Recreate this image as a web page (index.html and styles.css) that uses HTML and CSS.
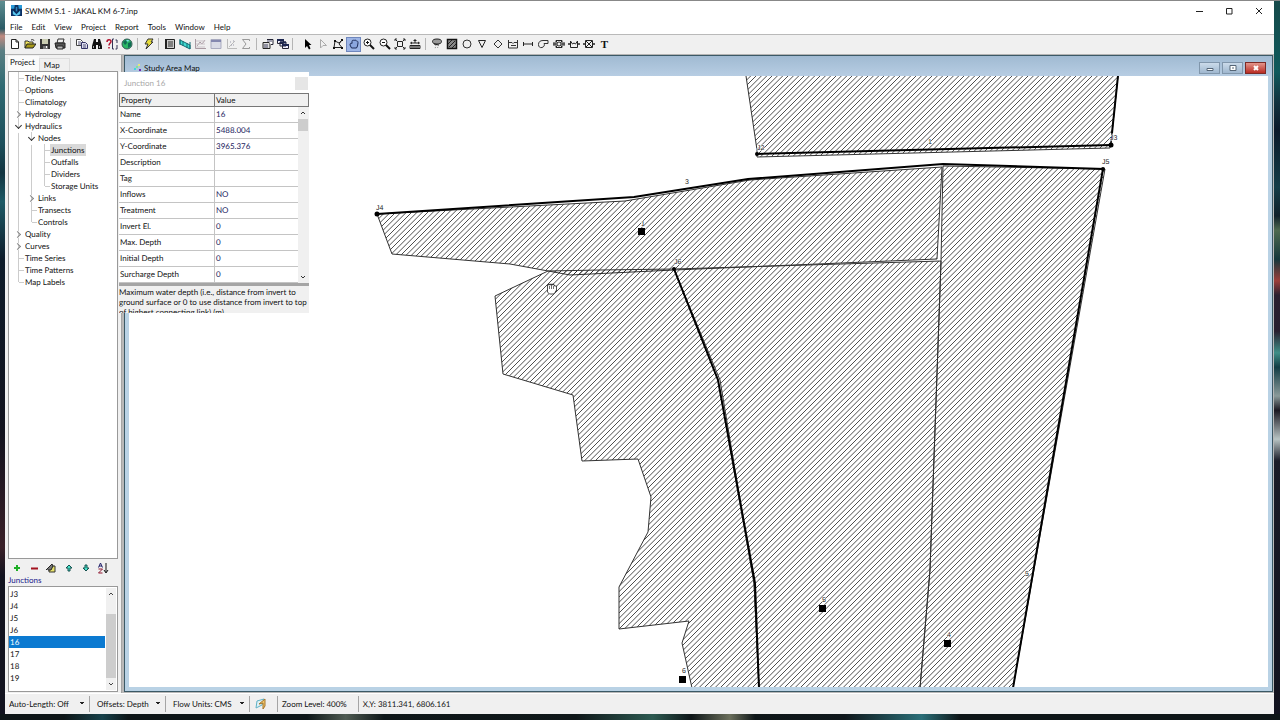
FILE: index.html
```html
<!DOCTYPE html>
<html lang="en">
<head>
<meta charset="utf-8">
<title>SWMM 5.1 - JAKAL KM 6-7.inp</title>
<link rel="stylesheet" href="styles.css">
</head>
<body>
<div class="window">
  <header class="titlebar">
    <svg class="app-icon" viewBox="0 0 12 12"><rect width="12" height="12" fill="#0b2f63"/><path d="M0 0h4v4H0zM8 0h4v4H8z" fill="#2b9bd8"/><path d="M4 2h4v5H4z" fill="#061a33"/><path d="M2 6l4 4 4-4v4l-4 2-4-2z" fill="#59c7ef"/><path d="M5 2h2v5H5z" fill="#2d7fc1"/></svg>
    <h1 class="title">SWMM 5.1 - JAKAL KM 6-7.inp</h1>
    <div class="window-controls">
      <button aria-label="Minimize"><svg viewBox="0 0 8 8"><path d="M1 4.500h7" stroke="#222"/></svg></button>
      <button aria-label="Maximize"><svg viewBox="0 0 8 8"><path d="M1.500 1.500h5.500v5.500h-5.500z" fill="none" stroke="#222"/></svg></button>
      <button aria-label="Close"><svg viewBox="0 0 8 8"><path d="M1 1l6 6M7 1l-6 6" stroke="#222"/></svg></button>
    </div>
  </header>
  <nav class="menubar">
    <button>File</button><button>Edit</button><button>View</button><button>Project</button><button>Report</button><button>Tools</button><button>Window</button><button>Help</button>
  </nav>
  <div class="toolbar">
    <div class="tools four">
      <button aria-label="New"><svg viewBox="0 0 12 12"><path d="M2.500 1.500h4.500l2.500 2.500v6.500h-7zM7 1.500v2.500h2.500" fill="#fff" stroke="#222"/></svg></button>
      <button aria-label="Open"><svg viewBox="0 0 12 12"><path d="M1 10V3h3l1 1h4v2" fill="#f2e45c" stroke="#333"/><path d="M1 10l2-4h9l-3 4z" fill="#a89a18" stroke="#222"/><path d="M7 2c2-1 3 0 3 1" fill="none" stroke="#333"/></svg></button>
      <button aria-label="Save"><svg viewBox="0 0 12 12"><path d="M1 1h10v10H1z" fill="#333"/><path d="M3 1h6v5H3z" fill="#c9ccb0"/><path d="M4 8h5v3H4z" fill="#777"/><path d="M7 8h1v2H7z" fill="#fff"/></svg></button>
      <button aria-label="Print"><svg viewBox="0 0 12 12"><path d="M4 1h6L9 5H3z" fill="#eee" stroke="#333"/><path d="M1 5h10v5H2z" fill="#555" stroke="#222"/><path d="M3 8h6v3H3z" fill="#bbb" stroke="#222"/></svg></button>
    </div>
    <span class="sep"></span>
    <div class="tools four">
      <button aria-label="Copy"><svg viewBox="0 0 12 12"><path d="M.5 1.500h4l2 2v4h-6z" fill="#fff" stroke="#444"/><path d="M5.500 4.500h4l2 2v4h-6z" fill="#dde" stroke="#336"/><path d="M2 4h3M2 6h3M7 7h3M7 9h3" stroke="#557"/></svg></button>
      <button aria-label="Find"><svg viewBox="0 0 12 12"><path d="M3 1h2v3h2V1h2l2 7v3H7V7H5v4H1V8z" fill="#111"/><path d="M2.500 8v2M8.500 8v2" stroke="#aaa"/></svg></button>
      <button aria-label="Query"><svg viewBox="0 0 12 12"><path d="M1 4c0-3 4-3 4-.5C5 5 3 5 3 7.500M3 9v1.500" fill="none" stroke="#b3122e" stroke-width="1.500"/><path d="M8 1H6.500v10H8M9.500 2h1.500v3M11 7v4H9.500" fill="none" stroke="#335"/></svg></button>
      <button aria-label="Overview map"><svg viewBox="0 0 12 12"><circle cx="6" cy="6" r="5" fill="#29b765" stroke="#355"/><path d="M2 4l3-2 1 3-2 2zM7 5l3-1v4l-3 2z" fill="#0f6b55"/><path d="M5 2l3 0-1 2z" fill="#7fe0ee"/></svg></button>
    </div>
    <span class="sep"></span>
    <div class="tools one">
      <button aria-label="Run"><svg viewBox="0 0 12 12"><path d="M5 1h5L8 4h2L3 11l2-5H2z" fill="#e6dc3a" stroke="#333"/></svg></button>
    </div>
    <span class="sep"></span>
    <div class="tools six">
      <button aria-label="Status report"><svg viewBox="0 0 12 12"><path d="M2.500 1.500h8v9h-8z" fill="#ccc" stroke="#222"/><path d="M1 1h2v10H1z" fill="#222"/><path d="M4 4h5M4 6h5M4 8h5" stroke="#333"/></svg></button>
      <button aria-label="Profile"><svg viewBox="0 0 12 12"><path d="M1 2l10 5v4L1 6z" fill="#3fdcd2" stroke="#176b73"/><path d="M1 1v6M11 4v7M4 3v5M8 5v5" stroke="#176b73"/></svg></button>
      <button aria-label="Graph" disabled><svg viewBox="0 0 12 12"><path d="M1.500 1v9.500H12M3 8l3-4 2 2 3-4" fill="none" stroke="#a99aa2"/><path d="M2 3h9M2 6h9M2 9h9" stroke="#cbc3c8"/></svg></button>
      <button aria-label="Table" disabled><svg viewBox="0 0 12 12"><path d="M1 1.500h10v9H1z" fill="#d8dae6" stroke="#a9abc0"/><path d="M1 3h10" stroke="#8488b0" stroke-width="2"/></svg></button>
      <button aria-label="Scatter" disabled><svg viewBox="0 0 12 12"><path d="M2.500 1v9.500H12M4 9l6-6" fill="none" stroke="#bbb"/><path d="M5 4h1M8 7h1M6 7h1M8 3h1" stroke="#99a"/></svg></button>
      <button aria-label="Statistics" disabled><svg viewBox="0 0 12 12"><path d="M9.500 3V1.500H2.500L6 6l-3.500 4.500h7V9" fill="none" stroke="#999"/></svg></button>
    </div>
    <span class="sep"></span>
    <div class="tools two">
      <button aria-label="Options"><svg viewBox="0 0 12 12"><path d="M1 4.500h7v6H1z" fill="#ddd" stroke="#222"/><path d="M5 1.500h6v5H9" fill="#fff" stroke="#223"/><path d="M2 7h4M2 9h4M5 3h5" stroke="#446"/></svg></button>
      <button aria-label="Cascade windows"><svg viewBox="0 0 12 12"><path d="M.5 1.500h6v4h-6zM3 4h6v4H3zM5.500 6.500h6v4h-6z" fill="#eef" stroke="#223"/><path d="M0 2h7M3 4.500h6M5 7h7" stroke="#1c2650" stroke-width="2"/></svg></button>
    </div>
    <span class="sep wide"></span>
    <div class="tools eight">
      <button aria-label="Select object"><svg viewBox="0 0 12 12"><path d="M3 1v9l2-2 2 3.500 1.500-1L7 7h2.500z" fill="#000"/></svg></button>
      <button aria-label="Select vertex" disabled><svg viewBox="0 0 12 12"><path d="M3.500 1.500v8.500l2.500-2.500h3.500z" fill="none" stroke="#aaa"/></svg></button>
      <button aria-label="Select region"><svg viewBox="0 0 12 12"><path d="M2 9.500L3 3l4 2 3-3M10 2L7 6l3 3.500H2" fill="none" stroke="#222"/><path d="M2 2h2v2H2zM9 1h2v2H9zM1 9h2v2H1zM9 9h2v2H9z" fill="#111"/></svg></button>
      <button class="active" aria-label="Pan"><svg viewBox="0 0 12 12"><path d="M3.500 10L2 7c0-2 1-2 2-1.500V3.500C4 2 5.500 2 6 2.500 7 2 8 2 8.500 3c1.500 0 1.500 1 1.500 2L9.500 8l-1 2z" fill="#8ba6df" stroke="#1d2b57"/></svg></button>
      <button aria-label="Zoom in"><svg viewBox="0 0 12 12"><circle cx="4.500" cy="4.500" r="3.500" fill="#fff" stroke="#222"/><path d="M7 7l4 4" stroke="#111" stroke-width="2"/><path d="M3 4.500h3M4.500 3v3" stroke="#111"/></svg></button>
      <button aria-label="Zoom out"><svg viewBox="0 0 12 12"><circle cx="4.500" cy="4.500" r="3.500" fill="#fff" stroke="#222"/><path d="M7 7l4 4" stroke="#111" stroke-width="2"/><path d="M3 4.500h3" stroke="#111"/></svg></button>
      <button aria-label="Full extent"><svg viewBox="0 0 12 12"><path d="M3.500 3.500h5v5h-5zM1 1l2 2M11 1L9 3M1 11l2-2M11 11L9 9" fill="none" stroke="#222"/><path d="M1 3V1h2M9 1h2v2M1 9v2h2M9 11h2V9" fill="none" stroke="#333"/></svg></button>
      <button aria-label="Measure"><svg viewBox="0 0 12 12"><path d="M1 7.500h10v3H1z" fill="#ccc" stroke="#222"/><path d="M3 8v2M5 8v2M7 8v2M9 8v2M2 5h8M3 4L1.500 5 3 6M9 4l1.500 1L9 6M6 1v4M4.500 2.500h3" fill="none" stroke="#222"/></svg></button>
    </div>
    <span class="sep"></span>
    <div class="tools twelve">
      <button aria-label="Rain gage"><svg viewBox="0 0 12 12"><ellipse cx="6" cy="3.500" rx="4.500" ry="2.500" fill="#999" stroke="#222"/><path d="M3 6l5 1" stroke="#222"/><path d="M5 7L4 11M7.500 7L6.500 10" stroke="#888" stroke-dasharray="1 1"/></svg></button>
      <button aria-label="Subcatchment"><svg viewBox="0 0 12 12"><path d="M1.500 1.500h9v9h-9z" fill="#888" stroke="#111" stroke-width="1.500"/><path d="M2 6l4-4M3 9l6-6M6 10l4-4" stroke="#222"/></svg></button>
      <button aria-label="Junction"><svg viewBox="0 0 12 12"><circle cx="6" cy="6" r="4" fill="none" stroke="#333"/></svg></button>
      <button aria-label="Outfall"><svg viewBox="0 0 12 12"><path d="M2.500 2.500h7L6 9.500z" fill="none" stroke="#222"/></svg></button>
      <button aria-label="Divider"><svg viewBox="0 0 12 12"><path d="M6 2l4 4-4 4-4-4z" fill="none" stroke="#333"/></svg></button>
      <button aria-label="Storage unit"><svg viewBox="0 0 12 12"><path d="M1.500 2v8h9V2M2 4.500h3l1 1 1-1h3M4 7.500h5" fill="none" stroke="#333"/></svg></button>
      <button aria-label="Conduit"><svg viewBox="0 0 12 12"><path d="M1.500 4v4M10.500 4v4M2 6h8" fill="none" stroke="#222"/></svg></button>
      <button aria-label="Pump"><svg viewBox="0 0 12 12"><path d="M11 2.500H6C3 2.500 1.500 4 1.500 6.500S3 10 5 9.500 8 7 7 5.500h4z" fill="none" stroke="#333"/></svg></button>
      <button aria-label="Orifice"><svg viewBox="0 0 12 12"><path d="M3 2.500h6v7H3zM0 6h3M9 6h3M3 3l6 6M9 3L3 9" fill="none" stroke="#222"/><circle cx="6" cy="6" r="2" fill="#eee" stroke="#333"/><path d="M1 4v4M11 4v4" stroke="#222"/></svg></button>
      <button aria-label="Weir"><svg viewBox="0 0 12 12"><path d="M2.500 3v6.500h7V3L7.500 6 6 5 4.500 6zM0 6h2M10 6h2M1 5v2M11 5v2" fill="none" stroke="#222"/></svg></button>
      <button aria-label="Outlet"><svg viewBox="0 0 12 12"><path d="M2.500 2.500h7v7h-7zM3 3l6 6M9 3L3 9M0 6h2M10 6h2M1 5v2M11 5v2" fill="none" stroke="#222"/></svg></button>
      <button aria-label="Label" class="label-tool">T</button>
    </div>
  </div>
  <main class="workspace">
    <aside class="browser">
      <div class="tabs" role="tablist"><button role="tab" aria-selected="true">Project</button><button role="tab" aria-selected="false">Map</button></div>
      <ul class="tree">
        <li>Title/Notes</li>
        <li>Options</li>
        <li>Climatology</li>
        <li class="closed">Hydrology</li>
        <li class="open">Hydraulics
          <ul>
            <li class="open">Nodes
              <ul><li><span class="current">Junctions</span></li><li>Outfalls</li><li>Dividers</li><li>Storage Units</li></ul>
            </li>
            <li class="closed">Links</li>
            <li>Transects</li>
            <li>Controls</li>
          </ul>
        </li>
        <li class="closed">Quality</li>
        <li class="closed">Curves</li>
        <li>Time Series</li>
        <li>Time Patterns</li>
        <li>Map Labels</li>
      </ul>
      <div class="list-tools">
        <button aria-label="Add"><svg viewBox="0 0 12 12"><path d="M6 3v6M3 6h6" stroke="#1fae26" stroke-width="2"/></svg></button>
        <button aria-label="Delete"><svg viewBox="0 0 12 12"><path d="M3 6.500h7" stroke="#a3121f" stroke-width="2"/></svg></button>
        <button aria-label="Edit"><svg viewBox="0 0 12 12"><path d="M6 4h4v6H4V7z" fill="#e8e26a" stroke="#333"/><path d="M1 8l4-4 2-2 1 2-2 4H3" fill="#777" stroke="#222"/></svg></button>
        <button aria-label="Move up"><svg viewBox="0 0 12 12"><path d="M6 3l3 3H7v3H5V6H3z" fill="#46e0c8" stroke="#14504e"/></svg></button>
        <button aria-label="Move down"><svg viewBox="0 0 12 12"><path d="M6 9l3-3H7V3H5v3H3z" fill="#46e0c8" stroke="#14504e"/></svg></button>
        <button aria-label="Sort"><svg viewBox="0 0 12 12"><path d="M1.500 5.500L3.500 1l2 4.500M2 4h3" fill="none" stroke="#20206a"/><path d="M1.500 7h4l-4 4h4" fill="none" stroke="#8f1730"/><path d="M9 1v9M7 8l2 3 2-3" fill="none" stroke="#111"/></svg></button>
      </div>
      <h2 class="list-title">Junctions</h2>
      <div class="list-box">
        <ul role="listbox" aria-label="Junctions"><li role="option">J3</li><li role="option">J4</li><li role="option">J5</li><li role="option">J6</li><li role="option" aria-selected="true">16</li><li role="option">17</li><li role="option">18</li><li role="option">19</li></ul>
        <div class="scrollbar low"><svg viewBox="0 0 10 12"><path d="M3 7l2-2 2 2" fill="none" stroke="#444"/></svg><i class="thumb"></i><svg viewBox="0 0 10 12"><path d="M3 5l2 2 2-2" fill="none" stroke="#444"/></svg></div>
      </div>
    </aside>
    <section class="mdi">
      <div class="map-window">
        <header class="map-title">
          <svg class="map-icon" viewBox="0 0 10 10"><path d="M1 5h2v2H1z" fill="#3fd7dd"/><path d="M5 1h2v2H5z" fill="#e6e87a"/><path d="M3 3h2v2H3z" fill="#7fe695"/><path d="M6 6h2v2H6z" fill="#712bb0"/></svg>
          <h2>Study Area Map</h2>
          <div class="map-controls">
            <button aria-label="Minimize map"><svg viewBox="0 0 12 8"><path d="M3 4.500h6v2H3z" fill="#fff" stroke="#567"/></svg></button>
            <button aria-label="Restore map"><svg viewBox="0 0 12 8"><path d="M3 1.500h6v5H3z" fill="#fff" stroke="#567"/><path d="M5 4h2" stroke="#567"/></svg></button>
            <button class="close" aria-label="Close map"><svg viewBox="0 0 12 8"><path d="M4 2l4 4M8 2L4 6" stroke="#fff" stroke-width="2"/></svg></button>
          </div>
        </header>
        <svg class="map" viewBox="129 76 1139 611" preserveAspectRatio="xMinYMin slice">
          <defs><pattern id="hatch" width="16" height="16" patternUnits="userSpaceOnUse"><path d="M-2 7.333L7.333 -2M-2 12.667L12.667 -2M-2 18L18 -2M3.333 18L18 3.333M8.667 18L18 8.667M14 18L18 14M-2 2L2 -2" stroke="#111" stroke-width=".75"/></pattern></defs>
          <g class="area">
            <path d="M746 76L757 150V157L1110 148L1112 133L1118 76"/>
            <path d="M377 214L392 254L510 264L570 275L674 270L937 259L942 167L750 180L625 201z"/>
            <path d="M943 166L1105 169L1013 688H920L930 570L941 262z"/>
            <path d="M674 269L941 261L930 570L920 688H759L754 583L720 380z"/>
            <path d="M495 296L548 271L600 270L674 269L718 380L754 583L759 688H692L682 643L689 621L619 629V587L648 532L651 497L638 459L582 461L573 395L503 374z"/>
          </g>
          <g class="conduit">
            <path d="M757 154L1111 145"/><path d="M1118 76L1112 133"/>
            <path d="M377 214L634 197L748 179L943 164L1103 169L1013 688"/>
            <path d="M674 269L718 380L755 583L759 688"/>
          </g>
          <path d="M1112 133L1111 145" stroke="#000"/>
          <g><circle cx="757" cy="154" r="2"/><circle cx="1111" cy="145" r="2.500"/><circle cx="377" cy="214" r="2.500"/><circle cx="1103" cy="169" r="2"/><circle cx="674" cy="269" r="2"/></g>
          <path d="M638 228h7v7h-7zM819 605h7v7h-7zM944 640h7v7h-7zM679 676h7v7h-7z"/>
          <g class="map-text">
            <text x="757" y="150">J2</text><text x="1110" y="140">J3</text><text x="376" y="210">J4</text><text x="1102" y="164">J5</text><text x="674" y="264">J6</text>
            <text x="685" y="184">3</text><text x="928" y="144">1</text><text x="641" y="226">1</text><text x="822" y="602">5</text><text x="947" y="637">4</text><text x="682" y="673">6</text><text x="1025" y="576">5</text>
          </g>
          <path d="M547.500 289v-4h1v-1h1v1h1v-1h1v1h1v-1h1v1h1v1h2v5h-1v1l-2 2h-4l-2-2z" fill="#fff" stroke="#222" stroke-width=".8"/><path d="M549.500 286v3M551.500 285v4M553.500 286v3" stroke="#333" stroke-width=".7"/>
        </svg>
      </div>
      <section class="properties">
        <header><h2>Junction 16</h2><button aria-label="Close properties"></button></header>
        <div class="grid">
          <table>
            <thead><tr><th>Property</th><th>Value</th></tr></thead>
            <tbody>
              <tr><td>Name</td><td>16</td></tr>
              <tr><td>X-Coordinate</td><td>5488.004</td></tr>
              <tr><td>Y-Coordinate</td><td>3965.376</td></tr>
              <tr><td>Description</td><td></td></tr>
              <tr><td>Tag</td><td></td></tr>
              <tr><td>Inflows</td><td>NO</td></tr>
              <tr><td>Treatment</td><td>NO</td></tr>
              <tr><td>Invert El.</td><td>0</td></tr>
              <tr><td>Max. Depth</td><td>0</td></tr>
              <tr><td>Initial Depth</td><td>0</td></tr>
              <tr><td>Surcharge Depth</td><td>0</td></tr>
            </tbody>
          </table>
          <div class="scrollbar high"><svg viewBox="0 0 10 12"><path d="M3 7l2-2 2 2" fill="none" stroke="#333"/></svg><i class="thumb"></i><svg viewBox="0 0 10 12"><path d="M3 5l2 2 2-2" fill="none" stroke="#333"/></svg></div>
        </div>
        <p class="hint">Maximum water depth (i.e., distance from invert to<br>ground surface or 0 to use distance from invert to top<br>of highest connecting link) (m)</p>
      </section>
    </section>
  </main>
  <footer class="statusbar">
    <label class="cell"><select aria-label="Auto-Length"><option>Auto-Length: Off</option></select></label>
    <label class="cell offsets"><select aria-label="Offsets"><option>Offsets: Depth</option></select></label>
    <label class="cell flow"><select aria-label="Flow units"><option>Flow Units: CMS</option></select></label>
    <span class="cell run"><svg viewBox="0 0 12 12"><path d="M2 3l7-2-2 6-6 3z" fill="#dff0f4" stroke="#5fb2c6"/><path d="M4 6l6-5v7l-2 3V5z" fill="#f0c66c" stroke="#a5762c"/></svg></span>
    <span class="cell zoom">Zoom Level: 400%</span>
    <span class="cell">X,Y: 3811.341, 6806.161</span>
  </footer>
</div>
</body>
</html>
```
FILE: styles.css
```css
*, ::before, ::after { box-sizing: border-box; }
body {
  margin: 0;
  height: 100vh;
  padding: 1px 6px 6px 5px;
  overflow: hidden;
  font: 8px/12px Lato, "Open Sans", sans-serif;
  text-rendering: geometricPrecision;
  color: #111;
  background:
    linear-gradient(#888, #888) 0 0 / 100% 1px no-repeat,
    linear-gradient(90deg, #0e1618 5%, #17414a 8%, #0e1618 10%, #0e1618 24%, #4f5b52 27%, #0e1618 30%, #10181a 45%, #2d5a51 51%, #0e1618 54%, #6b6f5c 57%, #0e1618 59%, #10181c 66%, #2b6f78 72%, #0e1618 75%) 0 100% / 100% 6px no-repeat,
    linear-gradient(#5f8f92, #2b5b66 4%, #c08a80 5%, #5b7f84 7%, #2f6a72 12%, #1c4e5a 20%, #123440 24%, #1d5a66 28%, #0e1c2a 36%, #12131f 60%, #3a2028 76%, #12131f 80%) 0 0 / 5px 100% no-repeat,
    linear-gradient(#16494a, #0f5a5c 10%, #123440 14%, #0b1a2a 18%, #143d48 26%, #10202a 30%, #4f6a50 32%, #14383c 36%, #9c3f3a 39%, #2a2030 41%, #281f30 46%, #3f8f88 49%, #123c44 51%, #8a9a9a 55%, #1a1822 57%, #b8c4c4 61%, #1a1c28 64%, #12131f) 100% 0 / 6px 100% no-repeat,
    #12131f;
}
h1, h2, p, ul { margin: 0; padding: 0; font: inherit; list-style: none; }
button, select {
  margin: 0; padding: 0; border: 0; background: none;
  font: inherit; color: inherit;
}
svg { display: block; }

.window { display: flex; flex-direction: column; height: 100%; background: #f0f0f0; }
.titlebar { display: flex; align-items: center; height: 19px; padding: 0 4px 0 6px; background: #fff; }
.app-icon { width: 11px; height: 11px; }
.title { margin-left: 3px; }
.window-controls { display: flex; margin-left: auto; }
.window-controls button { display: grid; place-items: center; width: 30px; height: 18px; }
.window-controls button:last-child { width: 22px; margin-left: 4px; }
.window-controls svg { width: 8px; height: 8px; }

.menubar { display: flex; gap: 9px; height: 14px; padding-left: 5px; background: #fff; }

.toolbar {
  display: flex; align-items: center; flex: none; height: 21px; padding: 0 0 1px 2px;
  border-top: 1px solid #b9b9b9; border-bottom: 1px solid #b4b4b4;
}
.tools { display: flex; justify-content: space-between; }
.tools button { display: grid; place-items: center; width: 15px; height: 15px; }
.tools svg { width: 12px; height: 12px; }
.tools .active { background: #9db5e6; border: 1px solid #6f87bd; }
.tools .label-tool { font: bold 11px/15px "Liberation Serif", serif; }
.one { width: 15px; } .two { width: 30px; } .four { width: 61px; }
.six { width: 92px; } .eight { width: 123px; } .twelve { width: 183px; }
.sep { width: 1px; height: 12px; margin: 0 3px 0 2px; background: #b5b5b5; }
.sep.wide { margin-right: 7px; }

.workspace { display: flex; flex: 1; min-height: 0; }
.browser { display: flex; flex-direction: column; flex: none; width: 117px; padding: 1px 3px 1px 3px; border-right: 1px solid #a5a5a5; }
.tabs { display: flex; align-items: flex-end; height: 15px; }
.tabs button { height: 13px; padding: 0 9px 2px 4px; border: 1px solid #ddd; border-bottom: 0; }
.tabs [aria-selected="true"] { height: 15px; padding: 0 4px 3px 2px; border: 0; background: #fbfbfb; }
.tree { flex: 1; min-height: 0; border: 1px solid #999; background: #fff; }
.tree li { position: relative; padding-left: 16px; white-space: nowrap; }
.tree li li { margin-left: -3px; }
.tree li::before { content: ""; position: absolute; top: 0; bottom: 0; left: 9px; border-left: 1px solid #ccc; }
.tree li:last-child::before { bottom: auto; height: 6px; }
.tree li::after { content: ""; position: absolute; top: 6px; left: 10px; width: 5px; border-top: 1px solid #ccc; }
.tree .closed::after, .tree .open::after {
  top: 4px; left: 6px; width: 5px; height: 5px;
  border: solid #888; border-width: 1px 1px 0 0; box-shadow: 2px -2px 0 1px #fff;
  transform: rotate(45deg);
}
.tree .open::after { top: 3px; left: 7px; border-color: #333; transform: rotate(135deg); }
.current { display: inline-block; margin-left: -1px; padding: 0 2px 0 1px; background: #d9d9d9; }
.list-tools { display: flex; justify-content: space-between; padding: 3px 9px 0 3px; }
.list-tools svg { width: 12px; height: 12px; }
.list-title { color: #1a1a8c; }
.list-box { display: flex; flex: none; height: 106px; padding: 1px 1px 1px 0; border: 1px solid #999; background: #fff; }
.list-box ul { flex: 1; }
.list-box li { padding-left: 1px; }
.list-box [aria-selected="true"] { color: #fff; background: #0b7ad1; }
.scrollbar { display: flex; flex-direction: column; flex: none; width: 10px; background: #f0f0f0; }
.scrollbar svg { flex: none; width: 10px; height: 12px; }
.thumb { height: 64px; background: #cdcdcd; }
.low { margin: 0 0 0 1px; }
.low .thumb { margin: auto 0 0; }
.high .thumb { height: 12px; margin-bottom: auto; }

.mdi { position: relative; display: flex; flex: 1; min-width: 0; padding: 0 1px 1px 2px; background: #b8b8b8; }
.map-window {
  display: flex; flex-direction: column; flex: 1; min-width: 0;
  padding: 0 4px 4px; border: 1px solid #3b5966; background: #b9d2e5;
}
.map-title { display: flex; align-items: center; flex: none; height: 20px; margin: 0 -4px; padding: 4px 6px 0 8px; background: linear-gradient(#a0bad2, #b7cde3); }
.map-icon { width: 10px; height: 10px; }
.map-title h2 { margin-left: 1px; }
.map-controls { display: flex; gap: 2px; margin-left: auto; }
.map-controls button { display: grid; place-items: center; width: 21px; height: 12px; border: 1px solid #8096ab; background: linear-gradient(#cbdbea, #9fb7cf); }
.map-controls svg { width: 12px; height: 8px; }
.map-controls .close { border-color: #7c2a26; background: linear-gradient(#e3958b, #b92b22); }
.map { flex: 1; width: 100%; min-height: 0; background: #fff; }
.area { fill: url(#hatch); stroke: #333; stroke-width: 1px; }
.conduit { fill: none; stroke: #000; stroke-width: 2px; }
.map-text { font: 7px "Liberation Sans", sans-serif; fill: #222; stroke: #fff; stroke-width: 1px; paint-order: stroke; }

/* Floating property editor over the map window. */
.properties { position: absolute; top: 17px; left: -3px; width: 190px; height: 241px; overflow: hidden; background: #f0f0f0; }
.properties header { display: flex; align-items: center; justify-content: space-between; height: 21px; padding: 1px 1px 0 5px; background: #fff; color: #a8a8a8; }
.properties header button { width: 13px; height: 13px; background: #e6e6e6; }
.grid { display: flex; position: relative; border-bottom: 3px solid #a5a5a5; }
.grid::after { content: ""; position: absolute; top: 0; right: 0; width: 12px; height: 14px; border: 1px solid #777; border-left: 0; background: #f0f0f0; }
.grid table { flex: 1; border-collapse: separate; border-spacing: 0; table-layout: fixed; background: #fff; }
.grid th, .grid td { height: 16px; padding: 0 1px 1px; font-weight: 400; text-align: left; border: solid #c4c4c4; border-width: 0 0 1px; }
.grid th { height: 14px; padding-bottom: 0; background: #f0f0f0; border: 1px solid #777; border-right-width: 0; }
.grid td:last-child { color: #1b1b5e; border-left-width: 1px; }
.grid th:first-child { width: 95px; }
.grid .scrollbar { margin: 14px 1px 0 0; }
.hint { padding-top: 1px; line-height: 10px; white-space: nowrap; }

.statusbar { display: flex; align-items: center; flex: none; height: 21px; padding: 2px 0 3px 4px; border-top: 1px solid #fff; }
.cell { display: flex; align-items: center; height: 16px; padding-right: 3px; margin-right: 4px; border-right: 1px solid #a5a5a5; }
.cell:last-child { border: 0; }
.cell select {
  width: 77px; height: 14px; appearance: none;
  background: conic-gradient(from -45deg at 50% 100%, #222 90deg, transparent 0) right 1px center / 6px 3px no-repeat;
}
.offsets { padding-left: 3px; }
.offsets select { width: 65px; }
.flow { padding-left: 3px; }
.flow select { width: 73px; }
.run { padding: 0 10px 0 1px; }
.run svg { width: 12px; height: 12px; }
.zoom { padding-right: 11px; }
```
